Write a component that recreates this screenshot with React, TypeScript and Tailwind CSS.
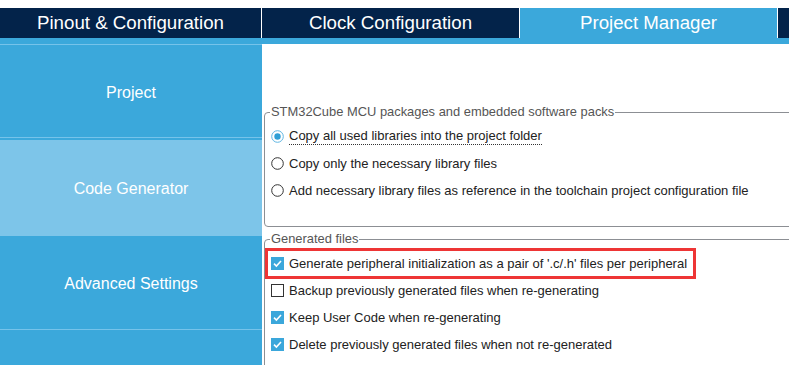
import React from 'react';

const tabs = [
  { label: 'Pinout & Configuration', width: 'w-[261px]', active: false },
  { label: 'Clock Configuration', width: 'w-[257px]', active: false },
  { label: 'Project Manager', width: 'w-[257px]', active: true },
  { label: '', width: 'flex-1', active: false },
];

function Radio({ checked }: { checked: boolean }) {
  return (
    <svg width="13" height="13" viewBox="0 0 13 13" className="shrink-0">
      <circle
        cx="6.5"
        cy="6.5"
        r="5.8"
        fill="white"
        stroke={checked ? '#5fb6e2' : '#333333'}
        strokeWidth="1"
      />
      {checked && <circle cx="6.5" cy="6.5" r="3.2" fill="#2f9fd6" />}
    </svg>
  );
}

function Checkbox({ checked }: { checked: boolean }) {
  if (checked) {
    return (
      <svg width="13" height="13" viewBox="0 0 13 13" className="shrink-0">
        <rect x="0" y="0" width="13" height="13" fill="#3ba7db" />
        <path d="M3 6.6 L5.4 9 L10 4" fill="none" stroke="white" strokeWidth="1.6" />
      </svg>
    );
  }
  return (
    <svg width="13" height="13" viewBox="0 0 13 13" className="shrink-0">
      <rect x="0.5" y="0.5" width="12" height="12" fill="white" stroke="#333333" strokeWidth="1" />
    </svg>
  );
}

export default function App() {
  const radios = [
    { label: 'Copy all used libraries into the project folder', checked: true },
    { label: 'Copy only the necessary library files', checked: false },
    { label: 'Add necessary library files as reference in the toolchain project configuration file', checked: false },
  ];

  const checks = [
    { label: "Generate peripheral initialization as a pair of '.c/.h' files per peripheral", checked: true },
    { label: 'Backup previously generated files when re-generating', checked: false },
    { label: 'Keep User Code when re-generating', checked: true },
    { label: 'Delete previously generated files when not re-generated', checked: true },
  ];

  return (
    <div className="w-[789px] h-[365px] overflow-hidden bg-white flex flex-col font-['Liberation_Sans',Arial,sans-serif]">
      <div className="h-2 shrink-0" />

      {/* tab bar */}
      <div className="flex h-[30px] gap-px shrink-0 bg-white">
        {tabs.map((tab, i) => (
          <div
            key={i}
            className={`${tab.width} shrink-0 flex items-center justify-center text-white text-[18.7px] ${
              tab.active ? 'bg-[#3ba8db]' : 'bg-[#03234a]'
            }`}
          >
            {tab.label}
          </div>
        ))}
      </div>
      <div className="h-[6px] shrink-0 bg-[#3ba8db]" />

      <div className="flex flex-1 min-h-0">
        {/* side menu */}
        <div className="w-[262px] shrink-0 bg-[#3ba8db] flex flex-col text-white text-base">
          <div className="h-px bg-[#76c3ea]" />
          <div className="h-[92px] pt-[3px] flex items-center justify-center">Project</div>
          <div className="h-px bg-[#76c3ea]" />
          <div className="h-[2px]" />
          <div className="h-[96px] pt-[2px] flex items-center justify-center bg-[#7dc5e9]">Code Generator</div>
          <div className="h-[93px] pt-[3px] flex items-center justify-center">Advanced Settings</div>
          <div className="h-px bg-[#76c3ea]" />
        </div>

        {/* content */}
        <div className="flex-1 pl-[2px] text-[13px] text-[#222222]">
          <fieldset className="mt-[60px] w-[560px] h-[123px] border border-[#8c8f94] rounded-[4px] pl-[6px]">
            <legend className="-ml-[1px] px-[1px] leading-4 text-[12.9px] text-[#555555]">
              STM32Cube MCU packages and embedded software packs
            </legend>
            <div className="pt-[3px] flex flex-col">
              {radios.map((r, i) => (
                <div key={i} className="h-[27px] flex items-center gap-[5px]">
                  <Radio checked={r.checked} />
                  <span className={r.checked ? 'border-b border-dotted border-[#333333] leading-4' : 'leading-4'}>
                    {r.label}
                  </span>
                </div>
              ))}
            </div>
          </fieldset>

          <fieldset className="mt-[4px] w-[560px] h-[200px] border border-[#8c8f94] rounded-[4px] pl-[6px]">
            <legend className="-ml-[1px] px-[1px] leading-4 text-[12.9px] text-[#555555]">Generated files</legend>
            <div className="pt-[3px] flex flex-col">
              {checks.map((c, i) => (
                <div key={i} className="relative h-[27px] flex items-center gap-[5px]">
                  <Checkbox checked={c.checked} />
                  <span className="leading-4">{c.label}</span>
                  {i === 0 && (
                    <div className="absolute -left-[6px] -top-[2px] w-[431px] h-[31px] border-[3px] border-[#ee3535]" />
                  )}
                </div>
              ))}
            </div>
          </fieldset>
        </div>
      </div>
    </div>
  );
}
